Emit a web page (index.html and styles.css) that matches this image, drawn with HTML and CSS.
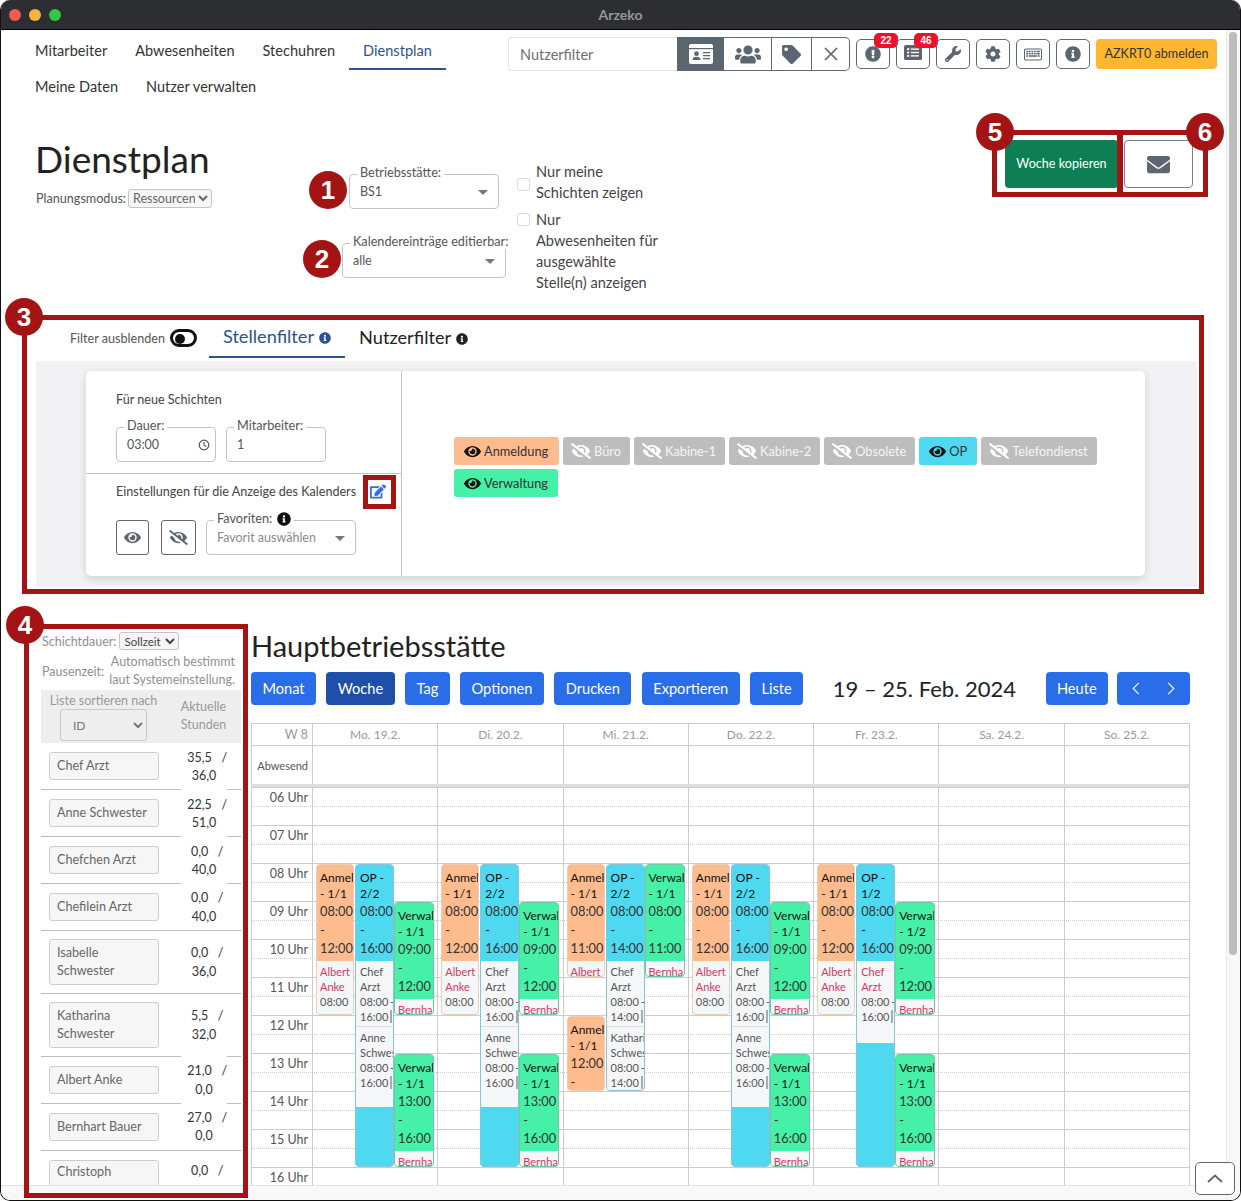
FILE: index.html
```html
<!DOCTYPE html>
<html lang="de">
<head>
<meta charset="utf-8">
<title>Arzeko – Dienstplan</title>
<link rel="stylesheet" href="styles.css">
</head>
<body>
<svg class="sprite" xmlns="http://www.w3.org/2000/svg">
  <symbol id="i-envelope" viewBox="0 0 512 512"><path fill="currentColor" d="M502.3 190.8c3.9-3.1 9.7-.2 9.7 4.7V400c0 26.5-21.5 48-48 48H48c-26.5 0-48-21.5-48-48V195.6c0-5 5.7-7.8 9.7-4.7 22.4 17.4 52.1 39.5 154.1 113.6 21.1 15.4 56.7 47.8 92.2 47.6 35.7.3 72-32.8 92.3-47.6 102-74.1 131.6-96.3 154-113.7zM256 320c23.2.4 56.6-29.2 73.4-41.4 132.7-96.3 142.8-104.7 173.4-128.7 5.8-4.5 9.2-11.5 9.2-18.9v-19c0-26.5-21.5-48-48-48H48C21.5 64 0 85.5 0 112v19c0 7.4 3.4 14.3 9.2 18.9 30.6 23.9 40.7 32.4 173.4 128.7 16.8 12.2 50.2 41.8 73.4 41.4z"/></symbol>
  <symbol id="i-info" viewBox="0 0 512 512"><path fill="currentColor" d="M256 8C119.043 8 8 119.083 8 256c0 136.997 111.043 248 248 248s248-111.003 248-248C504 119.083 392.957 8 256 8zm0 110c23.196 0 42 18.804 42 42s-18.804 42-42 42-42-18.804-42-42 18.804-42 42-42zm56 254c0 6.627-5.373 12-12 12h-88c-6.627 0-12-5.373-12-12v-24c0-6.627 5.373-12 12-12h12v-64h-12c-6.627 0-12-5.373-12-12v-24c0-6.627 5.373-12 12-12h64c6.627 0 12 5.373 12 12v100h12c6.627 0 12 5.373 12 12v24z"/></symbol>
  <symbol id="i-exclaim" viewBox="0 0 512 512"><path fill="currentColor" d="M504 256c0 136.997-111.043 248-248 248S8 392.997 8 256C8 119.083 119.043 8 256 8s248 111.083 248 248zm-248 50c-25.405 0-46 20.595-46 46s20.595 46 46 46 46-20.595 46-46-20.595-46-46-46zm-43.673-165.346l7.418 136c.347 6.364 5.609 11.346 11.982 11.346h48.546c6.373 0 11.635-4.982 11.982-11.346l7.418-136c.375-6.874-5.098-12.654-11.982-12.654h-63.383c-6.884 0-12.356 5.78-11.981 12.654z"/></symbol>
  <symbol id="i-tag" viewBox="0 0 512 512"><path fill="currentColor" d="M0 252.118V48C0 21.49 21.49 0 48 0h204.118a48 48 0 0 1 33.941 14.059l211.882 211.882c18.745 18.745 18.745 49.137 0 67.882L293.823 497.941c-18.745 18.745-49.137 18.745-67.882 0L14.059 286.059A48 48 0 0 1 0 252.118zM112 64c-26.51 0-48 21.49-48 48s21.49 48 48 48 48-21.49 48-48-21.49-48-48-48z"/></symbol>
  <symbol id="i-cog" viewBox="0 0 512 512"><path fill="currentColor" d="M487.4 315.7l-42.6-24.6c4.3-23.2 4.3-47 0-70.2l42.6-24.6c4.9-2.8 7.1-8.6 5.5-14-11.1-35.6-30-67.8-54.7-94.6-3.8-4.1-10-5.1-14.8-2.3L380.8 110c-17.9-15.4-38.5-27.3-60.8-35.1V25.8c0-5.6-3.9-10.5-9.4-11.7-36.7-8.2-74.3-7.8-109.2 0-5.5 1.2-9.4 6.1-9.4 11.7V75c-22.2 7.9-42.8 19.8-60.8 35.1L88.7 85.5c-4.9-2.8-11-1.9-14.8 2.3-24.7 26.7-43.6 58.9-54.7 94.6-1.7 5.4.6 11.2 5.5 14L67.3 221c-4.3 23.2-4.3 47 0 70.2l-42.6 24.6c-4.9 2.8-7.1 8.6-5.5 14 11.1 35.6 30 67.8 54.7 94.6 3.8 4.1 10 5.1 14.8 2.3l42.6-24.6c17.9 15.4 38.5 27.3 60.8 35.1v49.2c0 5.6 3.9 10.5 9.4 11.7 36.7 8.2 74.3 7.8 109.2 0 5.5-1.2 9.4-6.1 9.4-11.7v-49.2c22.2-7.9 42.8-19.8 60.8-35.1l42.6 24.6c4.9 2.8 11 1.9 14.8-2.3 24.7-26.7 43.6-58.9 54.7-94.6 1.5-5.5-.7-11.3-5.6-14.1zM256 336c-44.1 0-80-35.9-80-80s35.9-80 80-80 80 35.9 80 80-35.9 80-80 80z"/></symbol>
  <symbol id="i-wrench" viewBox="0 0 512 512"><path fill="currentColor" d="M507.73 109.1c-2.24-9.03-13.54-12.09-20.12-5.51l-74.36 74.36-67.88-11.31-11.31-67.88 74.36-74.36c6.62-6.62 3.43-17.9-5.66-20.16-47.38-11.74-99.55.91-136.58 37.93-39.64 39.64-50.55 97.1-34.05 147.2L18.74 402.76c-24.99 24.99-24.99 65.51 0 90.5 24.99 24.99 65.51 24.99 90.5 0l213.21-213.21c50.12 16.71 107.47 5.68 147.37-34.22 37.07-37.07 49.7-89.32 37.91-136.73zM64 472c-13.25 0-24-10.75-24-24 0-13.26 10.75-24 24-24s24 10.74 24 24c0 13.25-10.75 24-24 24z"/></symbol>
  <symbol id="i-eye" viewBox="0 0 576 512"><path fill="currentColor" d="M572.52 241.4C518.29 135.59 410.93 64 288 64S57.68 135.64 3.48 241.41a32.35 32.35 0 0 0 0 29.19C57.71 376.41 165.07 448 288 448s230.32-71.64 284.52-177.41a32.35 32.35 0 0 0 0-29.19zM288 400a144 144 0 1 1 144-144 143.93 143.93 0 0 1-144 144zm0-240a95.31 95.31 0 0 0-25.31 3.79 47.85 47.85 0 0 1-66.9 66.9A95.78 95.78 0 1 0 288 160z"/></symbol>
  <symbol id="i-eye-slash" viewBox="0 0 640 512"><path fill="currentColor" d="M320 400c-75.85 0-137.25-58.71-142.9-133.11L72.2 185.82c-13.79 17.3-26.48 35.59-36.72 55.59a32.35 32.35 0 0 0 0 29.19C89.71 376.41 197.07 448 320 448c26.91 0 52.87-4 77.89-10.46L346 397.39a144.13 144.13 0 0 1-26 2.61zm313.82 58.1l-110.55-85.44a331.25 331.25 0 0 0 81.25-102.07 32.35 32.35 0 0 0 0-29.19C550.29 135.59 442.93 64 320 64a308.15 308.15 0 0 0-147.32 37.7L45.46 3.37A16 16 0 0 0 23 6.18L3.37 31.45A16 16 0 0 0 6.18 53.9l588.36 454.73a16 16 0 0 0 22.46-2.81l19.64-25.27a16 16 0 0 0-2.82-22.45zm-183.72-142l-39.3-30.38A94.75 94.75 0 0 0 416 256a94.76 94.76 0 0 0-121.31-92.21A47.65 47.65 0 0 1 304 192a46.64 46.64 0 0 1-1.54 10l-73.61-56.89A142.31 142.31 0 0 1 320 112a143.92 143.92 0 0 1 144 144c0 21.63-5.29 41.79-13.9 60.11z"/></symbol>
  <symbol id="i-edit" viewBox="0 0 576 512"><path fill="currentColor" d="M402.6 83.2l90.2 90.2c3.8 3.8 3.8 10 0 13.8L274.4 405.6l-92.8 10.3c-12.4 1.4-22.9-9.1-21.5-21.5l10.3-92.8L388.8 83.2c3.8-3.8 10-3.8 13.8 0zm162-22.9l-48.8-48.8c-15.2-15.2-39.9-15.2-55.2 0l-35.4 35.4c-3.8 3.8-3.8 10 0 13.8l90.2 90.2c3.8 3.8 10 3.8 13.8 0l35.4-35.4c15.2-15.3 15.2-40 0-55.2zM384 346.2V448H64V128h229.8c3.2 0 6.2-1.3 8.5-3.5l40-40c7.6-7.6 2.2-20.5-8.5-20.5H48C21.5 64 0 85.5 0 112v352c0 26.5 21.5 48 48 48h352c26.5 0 48-21.5 48-48V306.2c0-10.7-12.9-16-20.5-8.5l-40 40c-2.2 2.3-3.5 5.3-3.5 8.5z"/></symbol>
  <symbol id="i-users" viewBox="0 0 640 512"><path fill="currentColor" d="M96 224c35.3 0 64-28.7 64-64s-28.7-64-64-64-64 28.7-64 64 28.7 64 64 64zm448 0c35.3 0 64-28.7 64-64s-28.7-64-64-64-64 28.7-64 64 28.7 64 64 64zm32 32h-64c-17.6 0-33.5 7.1-45.1 18.6 40.3 22.1 68.9 62 75.1 109.4h66c17.7 0 32-14.3 32-32v-32c0-35.3-28.7-64-64-64zm-256 0c61.9 0 112-50.1 112-112S381.9 32 320 32 208 82.1 208 144s50.1 112 112 112zm76.8 32h-8.3c-20.8 10-43.9 16-68.5 16s-47.6-6-68.5-16h-8.3C179.6 288 128 339.6 128 403.2V432c0 26.5 21.5 48 48 48h288c26.5 0 48-21.5 48-48v-28.8c0-63.6-51.6-115.2-115.2-115.2zm-223.7-13.4C161.5 263.1 145.6 256 128 256H64c-35.3 0-64 28.7-64 64v32c0 17.7 14.3 32 32 32h65.9c6.3-47.4 34.9-87.3 75.2-109.4z"/></symbol>
  <symbol id="i-card" viewBox="0 0 24 20"><rect width="24" height="20" rx="2" fill="#fff"/><rect x="0" y="4" width="24" height="1.2" fill="#5c6670"/><circle cx="7.5" cy="9.7" r="2.4" fill="#5c6670"/><path fill="#5c6670" d="M3.5 16c0-2.4 1.6-3.3 4-3.3s4 .9 4 3.3z"/><rect x="14" y="8" width="7" height="1.3" fill="#5c6670"/><rect x="14" y="11" width="7" height="1.3" fill="#5c6670"/><rect x="14" y="14" width="7" height="1.3" fill="#5c6670"/></symbol>
  <symbol id="i-list" viewBox="0 0 24 20"><rect width="24" height="20" rx="2.5" fill="currentColor"/><g fill="#fff"><circle cx="5.5" cy="5.5" r="1.5"/><circle cx="5.5" cy="10" r="1.5"/><circle cx="5.5" cy="14.5" r="1.5"/><rect x="9" y="4.6" width="11" height="1.8"/><rect x="9" y="9.1" width="11" height="1.8"/><rect x="9" y="13.6" width="11" height="1.8"/></g></symbol>
  <symbol id="i-keyboard" viewBox="0 0 24 16"><rect x=".7" y=".7" width="22.6" height="14.6" rx="1.6" fill="none" stroke="currentColor" stroke-width="1.4"/><g fill="currentColor"><rect x="3" y="3" width="2.4" height="2"/><rect x="6.4" y="3" width="2.4" height="2"/><rect x="9.8" y="3" width="2.4" height="2"/><rect x="13.2" y="3" width="2.4" height="2"/><rect x="16.6" y="3" width="4.4" height="2"/><rect x="3" y="6" width="2.4" height="2"/><rect x="6.4" y="6" width="2.4" height="2"/><rect x="9.8" y="6" width="2.4" height="2"/><rect x="13.2" y="6" width="2.4" height="2"/><rect x="16.6" y="6" width="4.4" height="2"/><rect x="3" y="9" width="2.4" height="2"/><rect x="6.4" y="9" width="11" height="2"/><rect x="18.4" y="9" width="2.6" height="2"/></g></symbol>
</svg>

<div class="window">
  <div class="titlebar">
    <span class="dot dot-red"></span><span class="dot dot-yellow"></span><span class="dot dot-green"></span>
    <span class="app-name">Arzeko</span>
  </div>

  <div class="content">
    <header class="topbar">
      <nav class="nav">
        <a class="nav-item">Mitarbeiter</a>
        <a class="nav-item">Abwesenheiten</a>
        <a class="nav-item">Stechuhren</a>
        <a class="nav-item nav-active">Dienstplan</a>
        <a class="nav-item">Meine Daten</a>
        <a class="nav-item">Nutzer verwalten</a>
      </nav>
      <div class="tools">
        <div class="search">Nutzerfilter</div>
        <div class="segment">
          <span class="seg seg-card seg-on"><svg class="ic-card"><use href="#i-card"/></svg></span>
          <span class="seg seg-users"><svg class="ic-users"><use href="#i-users"/></svg></span>
          <span class="seg seg-tag"><svg class="ic-tag"><use href="#i-tag"/></svg></span>
          <span class="seg seg-x"><svg class="ic-x" viewBox="0 0 14 14"><path d="M1 1l12 12M13 1L1 13" stroke="currentColor" stroke-width="1.7" fill="none"/></svg></span>
        </div>
        <div class="icon-buttons">
          <span class="icon-btn"><svg class="ic-16"><use href="#i-exclaim"/></svg><b class="count">22</b></span>
          <span class="icon-btn"><svg class="ic-list"><use href="#i-list"/></svg><b class="count">46</b></span>
          <span class="icon-btn"><svg class="ic-16"><use href="#i-wrench"/></svg></span>
          <span class="icon-btn"><svg class="ic-16"><use href="#i-cog"/></svg></span>
          <span class="icon-btn"><svg class="ic-kbd"><use href="#i-keyboard"/></svg></span>
          <span class="icon-btn"><svg class="ic-16"><use href="#i-info"/></svg></span>
        </div>
        <span class="logout">AZKRT0 abmelden</span>
      </div>
    </header>

    <section class="intro">
      <div class="intro-title">
        <h1 class="page-title">Dienstplan</h1>
        <div class="mode-row">
          <label class="mode-label">Planungsmodus:</label>
          <select class="mini-select mode-select"><option>Ressourcen</option></select>
        </div>
      </div>
      <div class="intro-fields">
        <div class="field field-site"><span class="field-label">Betriebsstätte:</span><span class="field-value">BS1</span><i class="caret"></i></div>
        <div class="field field-edit"><span class="field-label">Kalendereinträge editierbar:</span><span class="field-value">alle</span><i class="caret"></i></div>
      </div>
      <div class="intro-checks">
        <div class="check check-mid"><span class="box"></span><span class="check-text">Nur meine Schichten zeigen</span></div>
        <div class="check"><span class="box"></span><span class="check-text">Nur Abwesenheiten für ausgewählte Stelle(n) anzeigen</span></div>
      </div>
      <div class="intro-actions">
        <button class="copy-btn">Woche kopieren</button>
        <button class="mail-btn"><svg class="ic-mail"><use href="#i-envelope"/></svg></button>
      </div>
    </section>

    <section class="filters">
      <div class="filter-tabs">
        <span class="filter-toggle-label">Filter ausblenden</span>
        <span class="toggle"><i></i></span>
        <span class="tab tab-on">Stellenfilter <svg class="ic-12"><use href="#i-info"/></svg></span>
        <span class="tab">Nutzerfilter <svg class="ic-12"><use href="#i-info"/></svg></span>
      </div>
      <div class="filter-panel">
        <div class="filter-card">
          <div class="filter-left">
            <div class="new-shifts">
              <div class="card-text">Für neue Schichten</div>
              <div class="field-row">
                <div class="field field-small"><span class="field-label">Dauer:</span><span class="field-value">03:00</span>
                  <svg class="ic-clock" viewBox="0 0 12 12"><circle cx="6" cy="6" r="4.8" fill="none" stroke="currentColor" stroke-width="1.2"/><path d="M6 3v3l2.2 1.6" fill="none" stroke="currentColor" stroke-width="1.1"/></svg></div>
                <div class="field field-small"><span class="field-label">Mitarbeiter:</span><span class="field-value">1</span></div>
              </div>
            </div>
            <div class="view-settings">
              <div class="card-text settings-head">Einstellungen für die Anzeige des Kalenders <svg class="ic-edit"><use href="#i-edit"/></svg></div>
              <div class="settings-row">
                <span class="square-btn"><svg class="ic-eye"><use href="#i-eye"/></svg></span>
                <span class="square-btn square-wide"><svg class="ic-eye-slash"><use href="#i-eye-slash"/></svg></span>
                <div class="field field-fav"><span class="field-label">Favoriten: <svg class="ic-14"><use href="#i-info"/></svg></span><span class="field-value muted">Favorit auswählen</span><i class="caret"></i></div>
              </div>
            </div>
          </div>
          <div class="filter-right">
            <span class="chip chip-peach chip-wide"><svg class="ic-chip"><use href="#i-eye"/></svg>Anmeldung</span>
            <span class="chip chip-off"><svg class="ic-chip-off"><use href="#i-eye-slash"/></svg>Büro</span>
            <span class="chip chip-off"><svg class="ic-chip-off"><use href="#i-eye-slash"/></svg>Kabine-1</span>
            <span class="chip chip-off"><svg class="ic-chip-off"><use href="#i-eye-slash"/></svg>Kabine-2</span>
            <span class="chip chip-off"><svg class="ic-chip-off"><use href="#i-eye-slash"/></svg>Obsolete</span>
            <span class="chip chip-cyan"><svg class="ic-chip"><use href="#i-eye"/></svg>OP</span>
            <span class="chip chip-off"><svg class="ic-chip-off"><use href="#i-eye-slash"/></svg>Telefondienst</span>
            <span class="chip chip-green"><svg class="ic-chip"><use href="#i-eye"/></svg>Verwaltung</span>
          </div>
        </div>
      </div>
    </section>

    <section class="planner">
      <aside class="side">
        <div class="side-line"><span>Schichtdauer:</span><select class="mini-select side-select"><option>Sollzeit</option></select></div>
        <div class="side-pause"><span>Pausenzeit:</span><span class="pause-text">Automatisch bestimmt laut Systemeinstellung.</span></div>
        <div class="side-head">
          <div class="sort-col"><span>Liste sortieren nach</span><select class="sort-select"><option>ID</option></select></div>
          <div class="hours-head">Aktuelle Stunden</div>
        </div>
        <div class="staff"><span class="name">Chef Arzt</span><span class="hours cut-b">&nbsp;&nbsp;35,5&nbsp;&nbsp;&nbsp;/<br>36,0</span></div>
        <div class="staff"><span class="name">Anne Schwester</span><span class="hours cut-b">&nbsp;&nbsp;22,5&nbsp;&nbsp;&nbsp;/<br>51,0</span></div>
        <div class="staff"><span class="name">Chefchen Arzt</span><span class="hours cut-b">&nbsp;&nbsp;0,0&nbsp;&nbsp;&nbsp;/<br>40,0</span></div>
        <div class="staff"><span class="name">Chefilein Arzt</span><span class="hours">&nbsp;&nbsp;0,0&nbsp;&nbsp;&nbsp;/<br>40,0</span></div>
        <div class="staff staff-tall"><span class="name">Isabelle Schwester</span><span class="hours">&nbsp;&nbsp;0,0&nbsp;&nbsp;&nbsp;/<br>36,0</span></div>
        <div class="staff staff-tall"><span class="name">Katharina Schwester</span><span class="hours">&nbsp;&nbsp;5,5&nbsp;&nbsp;&nbsp;/<br>32,0</span></div>
        <div class="staff"><span class="name">Albert Anke</span><span class="hours cut-t cut-b">&nbsp;&nbsp;21,0&nbsp;&nbsp;&nbsp;/<br>0,0</span></div>
        <div class="staff"><span class="name">Bernhart Bauer</span><span class="hours cut-t">&nbsp;&nbsp;27,0&nbsp;&nbsp;&nbsp;/<br>0,0</span></div>
        <div class="staff staff-tall staff-last"><span class="name">Christoph</span><span class="hours hours-top">&nbsp;&nbsp;0,0&nbsp;&nbsp;&nbsp;/</span></div>
      </aside>

      <div class="calendar">
        <h2 class="cal-title">Hauptbetriebsstätte</h2>
        <div class="cal-toolbar">
          <div class="btn-group">
            <button class="cal-btn">Monat</button>
            <button class="cal-btn cal-btn-on">Woche</button>
            <button class="cal-btn">Tag</button>
            <button class="cal-btn">Optionen</button>
            <button class="cal-btn">Drucken</button>
            <button class="cal-btn">Exportieren</button>
            <button class="cal-btn">Liste</button>
          </div>
          <div class="cal-date">19 – 25. Feb. 2024</div>
          <div class="btn-group btn-group-tight">
            <button class="cal-btn">Heute</button>
            <button class="cal-btn cal-arrows">
              <svg class="ic-arrow" viewBox="0 0 8 14"><path d="M7 1L1 7l6 6" fill="none" stroke="currentColor" stroke-width="1.2"/></svg>
              <svg class="ic-arrow" viewBox="0 0 8 14"><path d="M1 1l6 6-6 6" fill="none" stroke="currentColor" stroke-width="1.2"/></svg>
            </button>
          </div>
        </div>

        <div class="cal-grid cal-head">
          <div class="cell cell-week">W 8</div>
          <div class="cell">Mo. 19.2.</div><div class="cell">Di. 20.2.</div><div class="cell">Mi. 21.2.</div><div class="cell">Do. 22.2.</div><div class="cell">Fr. 23.2.</div><div class="cell">Sa. 24.2.</div><div class="cell">So. 25.2.</div>
        </div>
        <div class="cal-grid cal-allday">
          <div class="cell cell-abs">Abwesend</div>
          <div class="cell"></div><div class="cell"></div><div class="cell"></div><div class="cell"></div><div class="cell"></div><div class="cell"></div><div class="cell"></div>
        </div>

        <div class="cal-body">
          <div class="hour">06 Uhr</div><div class="hour">07 Uhr</div><div class="hour">08 Uhr</div><div class="hour">09 Uhr</div><div class="hour">10 Uhr</div><div class="hour">11 Uhr</div><div class="hour">12 Uhr</div><div class="hour">13 Uhr</div><div class="hour">14 Uhr</div><div class="hour">15 Uhr</div><div class="hour">16 Uhr</div>

          <div class="days">
            <div class="day">
              <div class="ev ev-anm s1 t8 h4"><div class="ev-head"><p class="l-t">Anmel</p><p class="l-t">- 1/1</p><p class="l-h">08:00</p><p class="l-h">-</p><p class="l-h">12:00</p></div><div class="ev-body"><div class="who red"><p>Albert</p><p>Anke</p><p class="ink">08:00</p></div></div></div>
              <div class="ev ev-op s2 t8 h8"><div class="ev-head"><p class="l-t">OP -</p><p class="l-t">2/2</p><p class="l-h">08:00</p><p class="l-h">-</p><p class="l-h">16:00</p></div><div class="ev-body ev-body-b"><div class="who who-sep"><p>Chef</p><p>Arzt</p><p>08:00 -</p><p>16:00<i class="bar"></i></p></div><div class="who"><p>Anne</p><p>Schwes</p><p>08:00 -</p><p>16:00<i class="bar"></i></p></div></div></div>
              <div class="ev ev-ver s3 t9 h3"><div class="ev-head"><p class="l-t">Verwal</p><p class="l-t">- 1/1</p><p class="l-h">09:00</p><p class="l-h">-</p><p class="l-h">12:00</p></div><div class="ev-body"><div class="who red"><p>Bernha</p></div></div></div>
              <div class="ev ev-ver s3 t13 h3"><div class="ev-head"><p class="l-t">Verwal</p><p class="l-t">- 1/1</p><p class="l-h">13:00</p><p class="l-h">-</p><p class="l-h">16:00</p></div><div class="ev-body"><div class="who red"><p>Bernha</p></div></div></div>
            </div>
            <div class="day">
              <div class="ev ev-anm s1 t8 h4"><div class="ev-head"><p class="l-t">Anmel</p><p class="l-t">- 1/1</p><p class="l-h">08:00</p><p class="l-h">-</p><p class="l-h">12:00</p></div><div class="ev-body"><div class="who red"><p>Albert</p><p>Anke</p><p class="ink">08:00</p></div></div></div>
              <div class="ev ev-op s2 t8 h8"><div class="ev-head"><p class="l-t">OP -</p><p class="l-t">2/2</p><p class="l-h">08:00</p><p class="l-h">-</p><p class="l-h">16:00</p></div><div class="ev-body ev-body-b"><div class="who who-sep"><p>Chef</p><p>Arzt</p><p>08:00 -</p><p>16:00<i class="bar"></i></p></div><div class="who"><p>Anne</p><p>Schwes</p><p>08:00 -</p><p>16:00<i class="bar"></i></p></div></div></div>
              <div class="ev ev-ver s3 t9 h3"><div class="ev-head"><p class="l-t">Verwal</p><p class="l-t">- 1/1</p><p class="l-h">09:00</p><p class="l-h">-</p><p class="l-h">12:00</p></div><div class="ev-body"><div class="who red"><p>Bernha</p></div></div></div>
              <div class="ev ev-ver s3 t13 h3"><div class="ev-head"><p class="l-t">Verwal</p><p class="l-t">- 1/1</p><p class="l-h">13:00</p><p class="l-h">-</p><p class="l-h">16:00</p></div><div class="ev-body"><div class="who red"><p>Bernha</p></div></div></div>
            </div>
            <div class="day">
              <div class="ev ev-anm s1 t8 h3"><div class="ev-head"><p class="l-t">Anmel</p><p class="l-t">- 1/1</p><p class="l-h">08:00</p><p class="l-h">-</p><p class="l-h">11:00</p></div><div class="ev-body"><div class="who red"><p>Albert</p></div></div></div>
              <div class="ev ev-anm s1 t12 h2"><div class="ev-head"><p class="l-t">Anmel</p><p class="l-t">- 1/1</p><p class="l-h">12:00</p><p class="l-h">-</p></div></div>
              <div class="ev ev-op ev-full s2 t8 h6"><div class="ev-head"><p class="l-t">OP -</p><p class="l-t">2/2</p><p class="l-h">08:00</p><p class="l-h">-</p><p class="l-h">14:00</p></div><div class="ev-body"><div class="who who-sep"><p>Chef</p><p>Arzt</p><p>08:00 -</p><p>14:00<i class="bar"></i></p></div><div class="who"><p>Kathari</p><p>Schwes</p><p>08:00 -</p><p>14:00<i class="bar"></i></p></div></div></div>
              <div class="ev ev-ver s3 t8 h3"><div class="ev-head"><p class="l-t">Verwal</p><p class="l-t">- 1/1</p><p class="l-h">08:00</p><p class="l-h">-</p><p class="l-h">11:00</p></div><div class="ev-body"><div class="who red"><p>Bernha</p></div></div></div>
            </div>
            <div class="day">
              <div class="ev ev-anm s1 t8 h4"><div class="ev-head"><p class="l-t">Anmel</p><p class="l-t">- 1/1</p><p class="l-h">08:00</p><p class="l-h">-</p><p class="l-h">12:00</p></div><div class="ev-body"><div class="who red"><p>Albert</p><p>Anke</p><p class="ink">08:00</p></div></div></div>
              <div class="ev ev-op s2 t8 h8"><div class="ev-head"><p class="l-t">OP -</p><p class="l-t">2/2</p><p class="l-h">08:00</p><p class="l-h">-</p><p class="l-h">16:00</p></div><div class="ev-body ev-body-b"><div class="who who-sep"><p>Chef</p><p>Arzt</p><p>08:00 -</p><p>16:00<i class="bar"></i></p></div><div class="who"><p>Anne</p><p>Schwes</p><p>08:00 -</p><p>16:00<i class="bar"></i></p></div></div></div>
              <div class="ev ev-ver s3 t9 h3"><div class="ev-head"><p class="l-t">Verwal</p><p class="l-t">- 1/1</p><p class="l-h">09:00</p><p class="l-h">-</p><p class="l-h">12:00</p></div><div class="ev-body"><div class="who red"><p>Bernha</p></div></div></div>
              <div class="ev ev-ver s3 t13 h3"><div class="ev-head"><p class="l-t">Verwal</p><p class="l-t">- 1/1</p><p class="l-h">13:00</p><p class="l-h">-</p><p class="l-h">16:00</p></div><div class="ev-body"><div class="who red"><p>Bernha</p></div></div></div>
            </div>
            <div class="day">
              <div class="ev ev-anm s1 t8 h4"><div class="ev-head"><p class="l-t">Anmel</p><p class="l-t">- 1/1</p><p class="l-h">08:00</p><p class="l-h">-</p><p class="l-h">12:00</p></div><div class="ev-body"><div class="who red"><p>Albert</p><p>Anke</p><p class="ink">08:00</p></div></div></div>
              <div class="ev ev-op s2 t8 h8"><div class="ev-head"><p class="l-t">OP -</p><p class="l-t">1/2</p><p class="l-h">08:00</p><p class="l-h">-</p><p class="l-h">16:00</p></div><div class="ev-body ev-body-a"><div class="who red"><p>Chef</p><p>Arzt</p><p class="ink">08:00 -</p><p class="ink">16:00<i class="bar"></i></p></div></div></div>
              <div class="ev ev-ver s3 t9 h3"><div class="ev-head"><p class="l-t">Verwal</p><p class="l-t">- 1/2</p><p class="l-h">09:00</p><p class="l-h">-</p><p class="l-h">12:00</p></div><div class="ev-body"><div class="who red"><p>Bernha</p></div></div></div>
              <div class="ev ev-ver s3 t13 h3"><div class="ev-head"><p class="l-t">Verwal</p><p class="l-t">- 1/1</p><p class="l-h">13:00</p><p class="l-h">-</p><p class="l-h">16:00</p></div><div class="ev-body"><div class="who red"><p>Bernha</p></div></div></div>
            </div>
            <div class="day"></div>
            <div class="day"></div>
          </div>
        </div>
      </div>
    </section>
    <div class="footer-strip"></div>
  </div>

  <div class="scrollbar"><i class="thumb"></i></div>
  <button class="to-top"><svg class="ic-up" viewBox="0 0 16 9"><path d="M1 8l7-6.5L15 8" fill="none" stroke="currentColor" stroke-width="1.8"/></svg></button>

  <span class="mark-box box-copy"></span>
  <span class="mark-box box-mail"></span>
  <span class="mark-box box-filter"></span>
  <span class="mark-box box-side"></span>
  <span class="mark-box box-edit"></span>
  <span class="marker m1">1</span>
  <span class="marker m2">2</span>
  <span class="marker m3">3</span>
  <span class="marker m4">4</span>
  <span class="marker m5">5</span>
  <span class="marker m6">6</span>
</div>
</body>
</html>
```

FILE: styles.css
```css
* { box-sizing: border-box; }
html, body { margin: 0; padding: 0; background: #fff; }
body { font-family: Lato, "Open Sans", sans-serif; color: #333; overflow: hidden; }
p, h1, h2 { margin: 0; font-weight: 400; }
button { font-family: inherit; cursor: pointer; }
.sprite { display: none; }

.window { position: relative; width: 1241px; height: 1201px; overflow: hidden; background: #fff; border: 1px solid #111; border-top: 0; border-radius: 10px; }

/* title bar */
.titlebar { position: relative; display: flex; align-items: center; gap: 8px; height: 30px; padding-left: 8px; background: #2d2e32; border-bottom: 1px solid #000; }
.dot { width: 12px; height: 12px; border-radius: 50%; }
.dot-red { background: #ee5b58; }
.dot-yellow { background: #f5b43f; }
.dot-green { background: #33c748; }
.app-name { position: absolute; left: 0; right: 0; text-align: center; font-size: 14px; font-weight: 700; color: #96979a; }

/* top navigation */
.content { display: flex; flex-direction: column; height: 1170px; }
.topbar { display: flex; height: 75px; padding-left: 20px; }
.nav { display: flex; flex-wrap: wrap; align-content: flex-start; width: 487px; padding-top: 2px; }
.nav-item { display: flex; align-items: center; height: 36px; padding: 0 14px; font-size: 14.5px; letter-spacing: .03px; color: #333; }
.nav-active { height: 38px; margin-bottom: -2px; color: #2c5290; border-bottom: 2.5px solid #2c5290; }
.tools { display: flex; align-items: flex-start; padding-top: 7px; }
.search { width: 169px; height: 34px; padding: 0 11px; line-height: 34px; font-size: 14.5px; color: #6b6f73; border: 1px solid #e2e4e6; border-right: 0; border-radius: 4px 0 0 4px; }
.segment { display: flex; height: 34px; border: 1px solid #60686f; border-left: 0; border-radius: 0 5px 5px 0; }
.seg { display: flex; align-items: center; justify-content: center; color: #5c6670; border-right: 1px solid #60686f; }
.seg:last-child { border-right: 0; }
.seg-card { width: 47px; margin-top: -1px; margin-bottom: -1px; background: #5c6670; border-right: 0; }
.seg-users { width: 48px; }
.seg-tag { width: 40px; }
.seg-x { width: 37px; }
.ic-card { width: 24px; height: 20px; }
.ic-users { width: 26px; height: 21px; }
.ic-tag { width: 19px; height: 19px; }
.ic-x { width: 14px; height: 14px; }
.icon-buttons { display: flex; gap: 6px; margin: 2px 6px 0; }
.icon-btn { position: relative; display: flex; align-items: center; justify-content: center; width: 34px; height: 30px; color: #5c6670; border: 1px solid #60686f; border-radius: 5px; }
.ic-16 { width: 16px; height: 16px; }
.ic-list { width: 18px; height: 15px; margin-top: -3px; }
.ic-kbd { width: 18px; height: 13px; }
.count { position: absolute; top: -7px; left: 17px; width: 24px; height: 15px; font: 700 10px/15px "Liberation Sans", sans-serif; text-align: center; color: #fff; background: #f0102c; border-radius: 5px; }
.logout { width: 121px; height: 30px; margin-top: 2px; line-height: 30px; text-align: center; font-size: 12.6px; color: #333; background: #ffb732; border-radius: 4px; }

/* intro */
.intro { display: flex; height: 210px; padding: 0 47px 0 35px; }
.intro-title { width: 306px; padding-top: 32px; }
.page-title { font-size: 37px; line-height: 44px; margin-left: -1px; color: #222; }
.mode-row { display: flex; align-items: center; gap: 2px; margin-top: 8px; }
.mode-label { font-size: 12.6px; color: #555; margin-top: -1px; }
.mini-select { font-family: inherit; font-size: 12.5px; color: #666; background: #f6f6f6; border: 1px solid #c4c4c4; border-radius: 3px; padding: 0; }
.mode-select { width: 84px; height: 19px; }
.intro-fields { width: 164px; padding-top: 69px; }
.field { position: relative; height: 35px; border: 1px solid #c4c4c4; border-radius: 4px; background: #fff; }
.field-site { width: 150px; margin-left: 7px; }
.field-edit { margin-top: 34px; }
.field-label { position: absolute; top: -11px; left: 7px; padding: 0 3px; font-size: 12.7px; line-height: 16px; color: #555; background: #fff; white-space: nowrap; }
.field-value { position: absolute; left: 10px; top: 9px; font-size: 12.5px; line-height: 16px; color: #555; }
.muted { color: #8a8a8a; }
.caret { position: absolute; right: 10px; top: 15px; width: 0; height: 0; border-left: 5px solid transparent; border-right: 5px solid transparent; border-top: 5px solid #777; }
.intro-checks { width: 150px; margin-left: 11px; padding-top: 56.4px; }
.check { display: flex; gap: 6px; align-items: flex-start; font-size: 14.6px; line-height: 21px; color: #444; margin-bottom: 6px; }
.check-mid { align-items: center; }
.box { flex: none; width: 13px; height: 13px; margin-top: 4px; border: 1px solid #d8d8d8; border-radius: 3px; background: #fff; }
.check-text { width: 125px; }
.intro-actions { display: flex; gap: 6px; margin-left: auto; padding-top: 35px; }
.copy-btn { width: 113px; height: 48px; padding-bottom: 2px; font-size: 12.6px; color: #fff; background: #0e7f54; border: 0; border-radius: 4px; }
.mail-btn { display: flex; align-items: center; justify-content: center; width: 69px; height: 48px; color: #5c6670; background: #fff; border: 1px solid #7a8087; border-radius: 4px; }
.ic-mail { width: 23px; height: 23px; }

/* filters */
.filters { height: 279px; padding: 0 43px 0 35px; }
.filter-tabs { position: relative; display: flex; align-items: center; height: 46px; padding-left: 34px; }
.filter-toggle-label { font-size: 12.6px; color: #555; }
.toggle { display: block; width: 27px; height: 18px; margin: 0 12px 0 5px; padding: 3px; border: 3px solid #111; border-radius: 9px; background: #fff; }
.toggle i { display: block; width: 10px; height: 10px; margin: -1px 0 0 -1px; background: #111; border-radius: 50%; }
.tab { display: flex; align-items: center; gap: 5px; height: 42px; padding: 0 14px; font-size: 18.2px; color: #222; margin-top: -2px; }
.tab-on { color: #2c5290; border-bottom: 2.5px solid #2c5290; }
.ic-12 { width: 12px; height: 12px; margin-top: 3px; }
.filter-panel { height: 226px; padding: 10px 52px 11px 50px; background: #f2f2f4; }
.filter-card { display: flex; height: 205px; background: #fff; border-radius: 5px; box-shadow: 0 3px 10px rgba(0,0,0,.14); }
.filter-left { flex: none; width: 316px; border-right: 1px solid #c4c4c4; }
.new-shifts { height: 103px; padding: 21px 0 0 30px; border-bottom: 1px solid #c4c4c4; }
.card-text { font-size: 12.6px; line-height: 16px; color: #444; }
.field-row { display: flex; gap: 10px; margin-top: 19px; }
.field-small { width: 100px; }
.ic-clock { position: absolute; right: 5px; top: 11px; width: 12px; height: 12px; color: #555; }
.view-settings { padding: 10px 0 0 30px; }
.settings-head { display: flex; align-items: center; gap: 14px; white-space: nowrap; }
.ic-edit { flex: none; width: 16px; height: 15px; color: #2a6de8; margin-top: -2px; }
.settings-row { display: flex; gap: 12px; margin-top: 20px; }
.square-btn { display: flex; align-items: center; justify-content: center; width: 33px; height: 35px; color: #5c6670; border: 1px solid #666; border-radius: 3px; }
.square-wide { width: 35px; }
.ic-eye { width: 17px; height: 15px; }
.ic-eye-slash { width: 19px; height: 15px; }
.field-fav { width: 150px; margin-left: -2px; }
.ic-14 { width: 14px; height: 14px; vertical-align: -3px; color: #111; margin-left: 2px; }
.filter-right { display: flex; flex-wrap: wrap; align-content: flex-start; gap: 4px; padding: 66px 46px 0 52px; flex: 1; }
.chip { display: flex; align-items: center; gap: 3px; height: 28px; padding: 0 10px; font-size: 12.8px; border-radius: 3px; white-space: nowrap; }
.chip-wide { width: 105px; }
.chip-off { padding: 0 9px 0 8px; background: #bdbdbd; color: #f5f5f5; }
.chip-peach { background: #fdbb8e; color: #333; }
.chip-cyan { background: #4fd9f1; color: #333; }
.chip-green { background: #47f0a7; color: #333; }
.ic-chip { width: 17px; height: 15px; color: #111; }
.ic-chip-off { width: 20px; height: 16px; color: #fff; }

/* planner area */
.planner { display: flex; flex: 1; min-height: 0; overflow: hidden; padding: 34px 0 0 40px; gap: 10px; }
.side { flex: none; width: 200px; font-size: 12.5px; color: #8f8f8f; margin-top: 3px; }
.side-line { display: flex; align-items: center; gap: 3px; height: 20px; margin-left: 1px; }
.side-select { width: 60px; height: 18px; font-size: 11.5px; color: #444; }
.side-pause { display: flex; align-items: center; justify-content: space-between; height: 36px; margin: 2px 6px 0 1px; }
.pause-text { width: 128px; text-align: right; line-height: 18px; }
.side-head { display: flex; height: 53px; margin-top: 1px; background: #eee; }
.sort-col { display: flex; flex-direction: column; align-items: center; width: 125px; padding-top: 4px; color: #999; line-height: 14px; }
.sort-select { width: 87px; height: 32px; margin-top: 1px; padding-left: 8px; font-family: inherit; font-size: 12px; color: #777; background: #eee; border: 1px solid #c8c8c8; border-radius: 3px; }
.hours-head { width: 75px; margin-top: 8px; text-align: center; line-height: 18px; color: #999; }
.staff { display: flex; align-items: center; height: 47px; border-bottom: 1px solid #bbb; }
.staff-tall { height: 63px; }
.name { display: flex; align-items: center; width: 110px; min-height: 27px; margin-left: 8px; padding: 4px 7px; font-size: 12.6px; line-height: 18px; color: #666; background: #f6f6f6; border: 1px solid #ccc; border-radius: 3px; }
.staff-last { border-bottom: 0; }
.staff-last .name { align-items: flex-start; height: 46px; padding-top: 2px; }
.hours { display: flex; align-items: center; justify-content: center; align-self: stretch; width: 46px; margin-left: 22px; padding-top: 1px; font-size: 12.5px; line-height: 18.5px; color: #333; text-align: center; background: #fff; white-space: nowrap; position: relative; }
.hours-top { align-items: flex-start; padding: 11px 0 0; }
.cut-b { margin-bottom: -1px; }
.cut-t { margin-top: -1px; }

.calendar { flex: none; width: 939px; }
.cal-title { height: 36px; font-size: 29px; line-height: 36px; color: #222; }
.cal-toolbar { display: flex; align-items: center; justify-content: space-between; margin-top: 8px; }
.btn-group { display: flex; gap: 10.5px; }
.btn-group-tight { gap: 9px; }
.cal-btn { height: 33px; padding: 0 11.4px; font-size: 14.6px; color: #fff; background: #2a6de8; border: 0; border-radius: 4px; }
.cal-btn-on { background: #1f4fa8; }
.cal-arrows { display: flex; align-items: center; justify-content: space-between; width: 73px; padding: 0 15px; }
.ic-arrow { width: 8px; height: 13px; }
.cal-date { font-size: 22px; color: #222; }
.cal-grid { display: grid; grid-template-columns: 61px repeat(7, 1fr); border-right: 1px solid #ccc; border-bottom: 1px solid #ccc; }
.cal-head { height: 23px; margin-top: 18px; border-top: 1px solid #ccc; }
.cal-allday { height: 41px; border-bottom: 3px solid #ddd; }
.cell { display: flex; align-items: center; justify-content: center; font-size: 12px; color: #999; border-left: 1px solid #ccc; }
.cell-week { justify-content: flex-end; padding-right: 4px; font-size: 12.5px; }
.cell-abs { justify-content: flex-end; padding-right: 4px; font-size: 11px; color: #555; }
.cal-body { position: relative; border-right: 1px solid #ccc; border-left: 1px solid #ccc; }
.hour { position: relative; height: 38px; padding-right: 881px; font-size: 12.5px; line-height: 19px; text-align: right; color: #555; border-top: 1px solid #ccc; white-space: nowrap; }
.hour::after { content: ""; position: absolute; left: 0; right: 0; top: 18px; border-top: 1px dotted #ccc; }
.days { position: absolute; inset: 0 0 0 60px; display: grid; grid-template-columns: repeat(7, 1fr); }
.day { position: relative; border-left: 1px solid #ccc; }

.ev { position: absolute; display: flex; flex-direction: column; overflow: hidden; border: 1.5px solid; border-radius: 4px; }
.s1 { left: 3px; width: 38px; }
.s2 { left: 42px; width: 39px; }
.s3 { left: 81px; width: 40px; }
.t8 { top: 77px; }
.t9 { top: 115px; }
.t12 { top: 229px; }
.t13 { top: 267px; }
.h2 { height: 75px; }
.h3 { height: 113px; }
.h4 { height: 151px; }
.h6 { height: 227px; }
.h8 { height: 303px; }
.ev-anm { background: #fdbb8e; border-color: #eccdb6; }
.ev-op { background: #4fd9f1; border-color: #83c7d6; }
.ev-ver { background: #47f0a7; border-color: #6ccaa6; }
.ev-full { background: #f5f6f8; }
.ev-head { flex: none; height: 96px; padding: 5px 0 0 3px; color: #222; white-space: nowrap; overflow: hidden; background: #fdbb8e; }
.ev-op .ev-head { padding-left: 4px; background: #4fd9f1; }
.ev-ver .ev-head { background: #47f0a7; }
.l-t { font-size: 12px; line-height: 16px; color: #111; }
.l-h { font-size: 12.8px; line-height: 18.5px; color: #333; }
.ev-body { flex: 1; min-height: 0; overflow: hidden; background: #f5f6f8; }
.ev-body-b { flex: none; height: 146px; }
.ev-body-a { flex: none; height: 82px; }
.who { padding: 2.5px 0 0 3px; font-size: 11px; line-height: 15px; word-spacing: -1px; color: #555; white-space: nowrap; overflow: hidden; }
.ev-op .who { padding-left: 4px; }
.who p { display: flex; align-items: center; }
.who-sep { height: 66px; border-bottom: 1px solid #dcdcdc; }
.red { color: #d8365e; }
.ink { color: #555; }
.bar { display: inline-block; flex: none; width: 2px; height: 13px; margin-left: 2px; background: #aaa; }

.footer-strip { flex: none; height: 15px; background: #f8f8f8; border-top: 1px solid #e2e2e2; }
.scrollbar { position: absolute; top: 30px; right: 0; bottom: 0; width: 14px; background: #f8f8f8; border-left: 1px solid #e9e9e9; }
.thumb { display: block; width: 8px; height: 923px; margin: 2px 0 0 2px; background: #bdbdbd; border-radius: 4px; }
.to-top { position: absolute; left: 1194px; top: 1162px; display: flex; align-items: center; justify-content: center; width: 40px; height: 33px; padding: 0; color: #666; background: #fff; border: 1px solid #666; border-radius: 5px; }
.ic-up { width: 16px; height: 9px; }

/* annotation overlays */
.mark-box { position: absolute; border: 5px solid #a51414; pointer-events: none; }
.box-copy { left: 991px; top: 130px; width: 131px; height: 67px; border-right-width: 6px; }
.box-mail { left: 1117px; top: 130px; width: 90px; height: 67px; }
.box-filter { left: 21px; top: 315px; width: 1182px; height: 279px; }
.box-side { left: 23px; top: 624px; width: 224px; height: 574px; }
.box-edit { left: 362px; top: 475px; width: 33px; height: 34px; }
.marker { position: absolute; display: flex; align-items: center; justify-content: center; width: 38px; height: 38px; font: 700 26px/38px "Liberation Sans", sans-serif; color: #fff; background: #a51414; border-radius: 50%; }
.m1 { left: 308px; top: 171px; }
.m2 { left: 302px; top: 240px; }
.m3 { left: 4px; top: 298px; }
.m4 { left: 5px; top: 606px; }
.m5 { left: 975px; top: 113px; }
.m6 { left: 1185px; top: 113px; }
```
